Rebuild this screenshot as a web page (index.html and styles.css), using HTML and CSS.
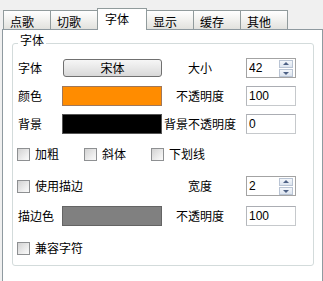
FILE: index.html
```html
<!DOCTYPE html>
<html>
  <head>
    <link rel="stylesheet" href="styles.css">
  </head>
  <body>
    <div class="tabs">
      <div class="tab">点歌</div>
      <div class="tab">切歌</div>
      <div class="tab active">字体</div>
      <div class="tab">显示</div>
      <div class="tab">缓存</div>
      <div class="tab">其他</div>
    </div>

    <div class="panel">
      <fieldset class="group">
        <legend>字体</legend>
        <div class="grid">
          <span class="label">字体</span>
          <button class="font-btn">宋体</button>
          <span class="label center">大小</span>
          <div class="spin">
            <input type="text" value="42">
            <div class="arrows">
              <span class="arrow up"></span>
              <span class="arrow down"></span>
            </div>
          </div>

          <span class="label">颜色</span>
          <span class="swatch orange"></span>
          <span class="label center">不透明度</span>
          <input class="field" type="text" value="100">

          <span class="label">背景</span>
          <span class="swatch black"></span>
          <span class="label center">背景不透明度</span>
          <input class="field" type="text" value="0">

          <div class="checks">
            <label class="check"><span class="box"></span>加粗</label>
            <label class="check"><span class="box"></span>斜体</label>
            <label class="check"><span class="box"></span>下划线</label>
          </div>

          <label class="check wide"><span class="box"></span>使用描边</label>
          <span class="label center">宽度</span>
          <div class="spin">
            <input type="text" value="2">
            <div class="arrows">
              <span class="arrow up"></span>
              <span class="arrow down"></span>
            </div>
          </div>

          <span class="label">描边色</span>
          <span class="swatch grey"></span>
          <span class="label center">不透明度</span>
          <input class="field" type="text" value="100">

          <label class="check full"><span class="box"></span>兼容字符</label>
        </div>
      </fieldset>
    </div>
  </body>
</html>
```

FILE: styles.css
```css
html, body {
  margin: 0;
  overflow: hidden;
}

body {
  background: #f0f0f0;
  font-family: "Noto Sans CJK SC", sans-serif;
  font-size: 12px;
  color: #000;
}

/* tab strip */
.tabs {
  display: flex;
  align-items: flex-end;
  height: 29px;
  padding-left: 3px;
}

.tab {
  box-sizing: border-box;
  height: 19px;
  padding: 3px 16px 0 6px;
  margin-right: -1px;
  line-height: 15px;
  border: 1px solid #919b9c;
  border-bottom: none;
  background: linear-gradient(#ffffff, #f4f4f2 40%, #e2e2de);
}

.tab.active {
  position: relative;
  z-index: 1;
  height: 22px;
  margin-bottom: -1px;
  padding: 2px 17px 0 7px;
  background: #fff;
  border-color: #919b9c;
}

.panel {
  box-sizing: border-box;
  width: 321px;
  height: 262px;
  margin-left: 2px;
  background: #fff;
  border: 1px solid #8f9aa0;
}

/* group box */
.group {
  margin: 4px 8px 0 9px;
  padding: 6px 5px 3px 5px;
  border: 1px solid #d3dbdb;
  border-radius: 3px;
}

.group legend {
  padding: 0 2px 6px;
  line-height: 12px;
}

.grid {
  display: grid;
  grid-template-columns: 44px 100px 76px 58px;
  grid-template-rows: 20px 20px 20px 24px 24px 20px 28px;
  row-gap: 8px;
  align-items: center;
}

.label {
  white-space: nowrap;
  line-height: 14px;
}

.label.center {
  text-align: center;
}

.font-btn {
  box-sizing: border-box;
  width: 99px;
  height: 18px;
  margin-left: 1px;
  padding: 0 0 2px;
  font: inherit;
  line-height: 13px;
  border: 1px solid #707070;
  border-radius: 3px;
  background: linear-gradient(#f6f6f6, #e8e8e8 50%, #d8d8d8);
}

.swatch {
  box-sizing: border-box;
  height: 20px;
  border: 1px solid #6e6e6e;
}

.swatch.orange {
  background: #ff8c00;
  border-color: #a0785a;
}

.swatch.black {
  background: #000;
  border-color: #555;
}

.swatch.grey {
  background: #808080;
  border-color: #646464;
}

.field,
.spin {
  box-sizing: border-box;
  justify-self: end;
  width: 50px;
  height: 20px;
  border: 1px solid #c6c9cc;
  border-top-color: #abadb3;
  border-left-color: #b4b7bb;
  background: #fff;
}

.field,
.spin input {
  padding: 0 0 0 2px;
  font-family: "Liberation Sans", sans-serif;
  font-size: 12px;
  outline: none;
}

.spin {
  display: flex;
  align-items: center;
  border-color: #a3a3a3;
}

.spin input {
  width: 30px;
  height: 16px;
  border: none;
}

.arrows {
  display: flex;
  flex-direction: column;
  gap: 1px;
  margin-left: auto;
  margin-right: 2px;
}

.arrow {
  position: relative;
  box-sizing: border-box;
  width: 14px;
  height: 8px;
  border: 1px solid #b9c4d4;
  background: linear-gradient(#f4f7fb, #dce4ef);
}

.arrow::after {
  content: "";
  position: absolute;
  left: 3px;
  top: 1px;
  border-left: 3px solid transparent;
  border-right: 3px solid transparent;
}

.arrow.up::after {
  border-bottom: 3px solid #4d6185;
}

.arrow.down::after {
  top: 2px;
  border-top: 3px solid #4d6185;
}

/* checkboxes */
.checks {
  grid-column: 1 / -1;
  display: flex;
  gap: 25px;
}

.check {
  display: flex;
  align-items: center;
  gap: 5px;
  margin-left: -1px;
  line-height: 14px;
  white-space: nowrap;
}

.checks .check + .check {
  margin-left: 0;
}

.check.wide {
  grid-column: 1 / 3;
}

.check.full {
  grid-column: 1 / -1;
}

.box {
  box-sizing: border-box;
  width: 13px;
  height: 13px;
  border: 1px solid #8e9092;
  background: linear-gradient(135deg, #d2d2d2, #f0f0f0 70%, #fafafa);
}
```
